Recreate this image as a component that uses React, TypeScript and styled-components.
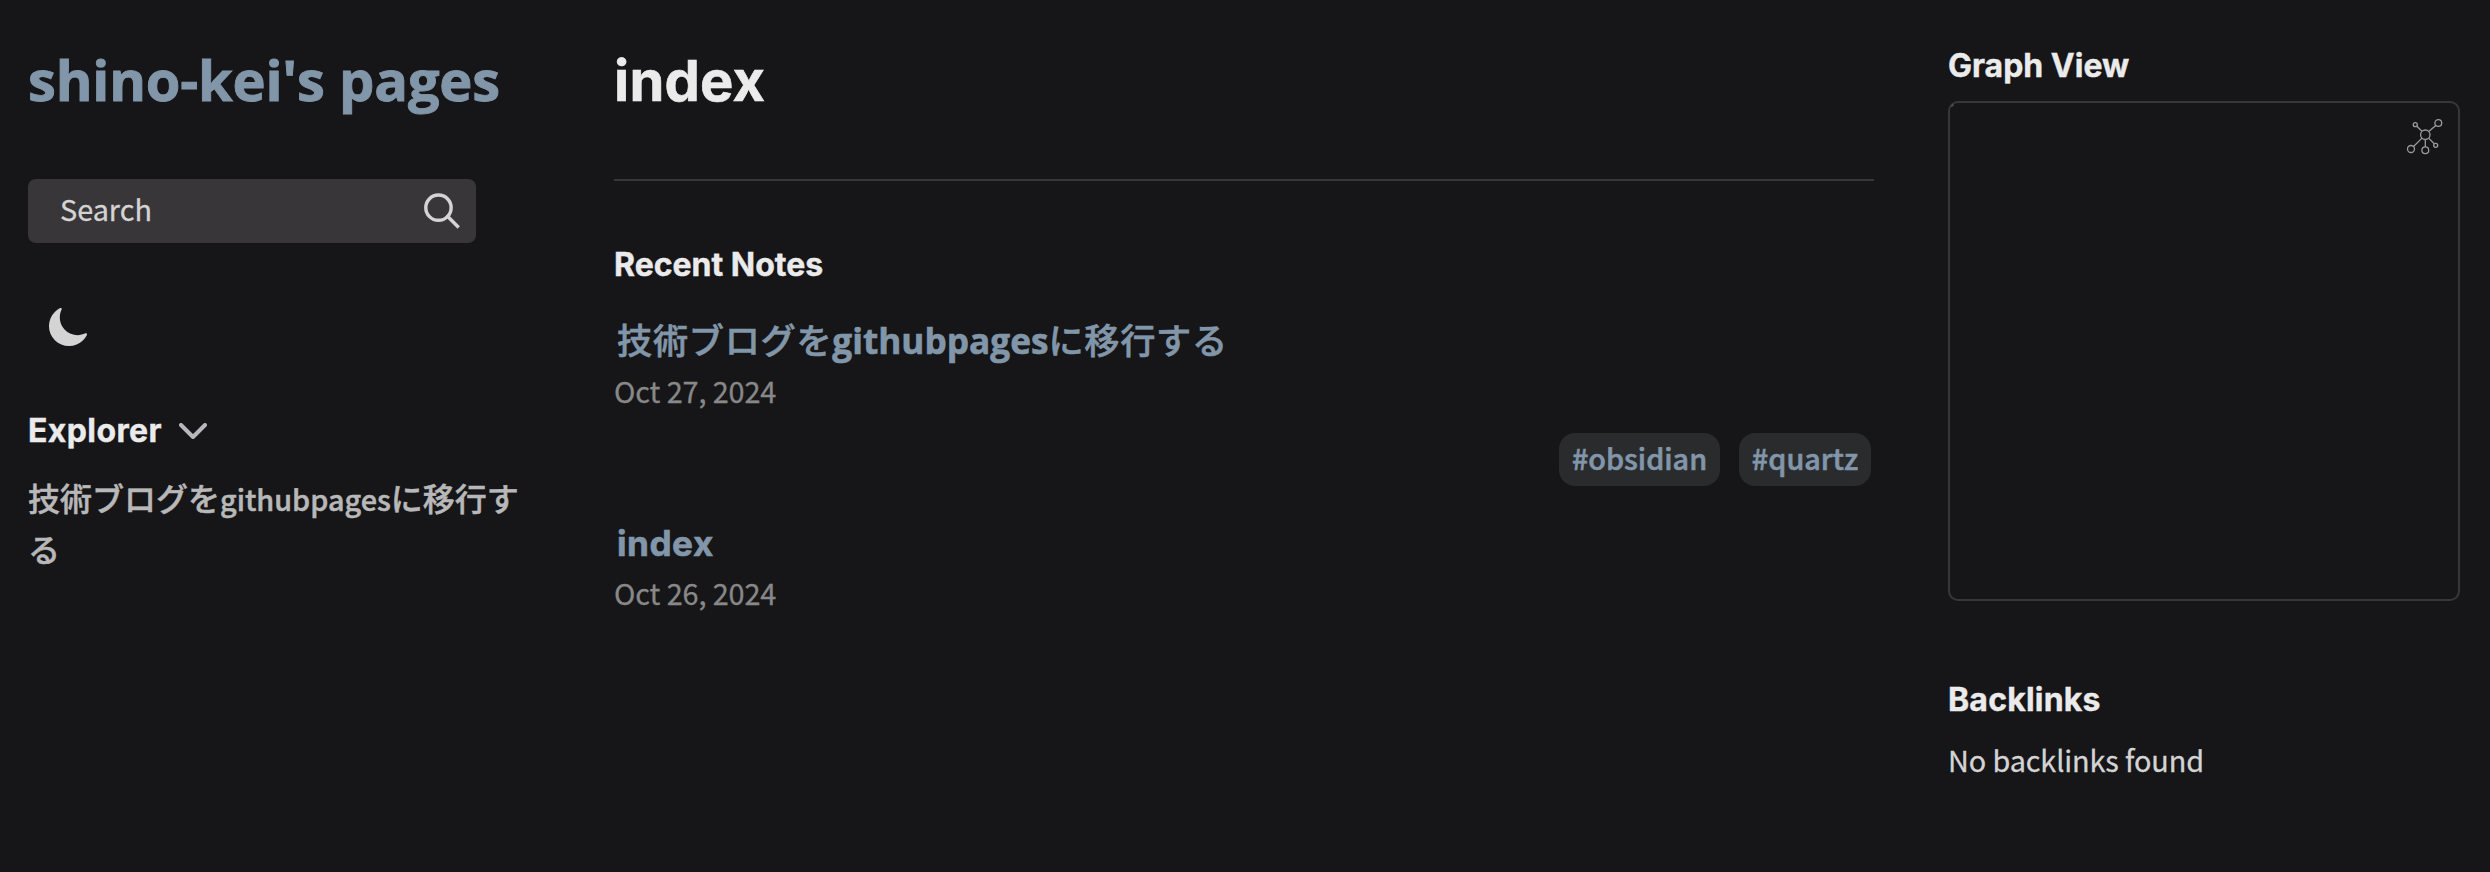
import React from "react";
import styled, { createGlobalStyle } from "styled-components";

const color = {
  light: "#161618",
  lightgray: "#393639",
  gray: "#888888",
  darkgray: "#d4d4d4",
  dark: "#ebebec",
  secondary: "#8296aa",
  highlight: "#2a2b2d",
};

const bodyFont = `"Noto Sans CJK JP", sans-serif`;
const headerFont = `"Inter", "Noto Sans CJK JP", sans-serif`;
const displayFont = `"Open Sans", "Noto Sans CJK JP", sans-serif`;

const GlobalStyle = createGlobalStyle`
  * { box-sizing: border-box; }
  body {
    margin: 0;
    background: ${color.light};
    color: ${color.darkgray};
    font-family: ${bodyFont};
    font-size: 28.8px;
  }
  h1, h2, h3, p, ul { margin: 0; padding: 0; font-size: inherit; }
`;

const Page = styled.div`
  display: grid;
  grid-template-columns: 512px 1260px 512px;
  column-gap: 74px;
  min-height: 872px;
  padding: 44px 30px 0 28px;
`;

const Column = styled.div<{ $offset?: number }>`
  display: flex;
  flex-direction: column;
  min-width: 0;
  padding-top: ${(p) => p.$offset ?? 0}px;
`;

const SiteTitle = styled.h1`
  height: 70px;
  margin: 0 0 65px;
  font: 700 56px/70px ${displayFont};
  letter-spacing: -0.2px;
  -webkit-text-stroke: 0.9px currentColor;
  color: ${color.secondary};
  white-space: nowrap;
`;

const PageTitle = styled.h1`
  height: 70px;
  font: 700 56px/70px ${headerFont};
  letter-spacing: 0.2px;
  -webkit-text-stroke: 0.6px currentColor;
  color: ${color.dark};
`;

const Rule = styled.hr`
  width: 100%;
  height: 2px;
  margin: 63px 0 64px;
  border: 0;
  background: ${color.lightgray};
`;

const SectionTitle = styled.h3<{ $spacing?: number }>`
  height: 40px;
  font: 700 32px/40px ${headerFont};
  letter-spacing: ${(p) => p.$spacing ?? 0}px;
  -webkit-text-stroke: 0.4px currentColor;
  color: ${color.dark};
  white-space: nowrap;
`;

const SearchButton = styled.button`
  display: flex;
  align-items: center;
  justify-content: space-between;
  width: 448px;
  height: 64px;
  padding: 0 16px 0 32px;
  border: 0;
  border-radius: 8px;
  background: ${color.lightgray};
  color: ${color.darkgray};
`;

const SearchLabel = styled.span`
  padding-bottom: 5px;
  font: 400 28.8px/40px ${bodyFont};
  -webkit-text-stroke: 0.3px currentColor;
`;

const ThemeToggle = styled.div`
  height: 40px;
  margin: 64px 0 64px 20px;
  color: ${color.darkgray};

  svg { display: block; }
`;

const ExplorerHeader = styled.div`
  display: flex;
  align-items: center;
  gap: 17px;
  height: 40px;
  margin-bottom: 21px;
`;

const ExplorerItem = styled.p`
  width: 492px;
  font: 500 32px/51px ${bodyFont};
  -webkit-text-stroke: 0.5px currentColor;
  color: #b8b8b9;
  word-break: break-all;
`;

const Latin = styled.span`
  font-size: 28.8px;
  line-height: 1;
`;

const NoteList = styled.ul`
  display: flex;
  flex-direction: column;
  gap: 33px;
  margin-top: 32px;
  list-style: none;
`;

const Note = styled.li`
  display: flex;
  flex-direction: column;
`;

const NoteLink = styled.a`
  height: 44px;
  margin: 0 0 10px 3px;
  font: 500 35.2px/44px ${bodyFont};
  letter-spacing: 0.7px;
  -webkit-text-stroke: 0.6px currentColor;
  color: ${color.secondary};
  white-space: nowrap;
`;

const NoteLatin = styled.span<{ $display?: boolean }>`
  font-family: ${(p) => (p.$display ? displayFont : headerFont)};
  font-weight: 700;
  line-height: 1;
  letter-spacing: ${(p) => (p.$display ? 0 : 0.5)}px;
`;

const NoteDate = styled.p`
  height: 40px;
  font: 400 28.8px/40px ${bodyFont};
  letter-spacing: -0.1px;
  -webkit-text-stroke: 0.3px currentColor;
  color: ${color.gray};
`;

const Tags = styled.div`
  display: flex;
  justify-content: flex-end;
  gap: 19px;
  margin: 22px 3px 0 0;
`;

const Tag = styled.a<{ $width: number }>`
  width: ${(p) => p.$width}px;
  height: 53px;
  border-radius: 16px;
  background: ${color.highlight};
  font: 500 28.8px/49px ${bodyFont};
  -webkit-text-stroke: 0.6px currentColor;
  color: ${color.secondary};
  text-align: center;
`;

const GraphBox = styled.div`
  position: relative;
  display: flex;
  justify-content: flex-end;
  height: 500px;
  margin: 15px 0 79px;
  padding: 14px;
  border: 2px solid ${color.lightgray};
  border-radius: 10px;
`;

const CornerNode = styled.span`
  position: absolute;
  top: 2px;
  left: 1px;
  width: 3px;
  height: 1px;
  background: #5a6570;
  transform: rotate(-45deg);
`;

const Paragraph = styled.p`
  margin-top: 20px;
  font: 400 28.8px/40px ${bodyFont};
  letter-spacing: -0.1px;
  -webkit-text-stroke: 0.3px currentColor;
  color: ${color.darkgray};
`;

const SearchIcon = () => (
  <svg width="36" height="36" viewBox="0 0 19.9 19.7" fill="none" stroke="currentColor" strokeWidth="1.9">
    <path d="M18.5 18.3l-5.4-5.4" strokeLinecap="square" />
    <circle cx="8" cy="8" r="7" />
  </svg>
);

const MoonIcon = () => (
  <svg width="40" height="40" viewBox="0 0 100 100" fill="currentColor">
    <path d="M96.76,66.458c-0.853-0.852-2.15-1.064-3.23-0.534c-6.063,2.991-12.858,4.571-19.655,4.571C62.022,70.495,50.88,65.88,42.5,57.5C29.043,44.043,25.658,23.536,34.076,6.47c0.532-1.08,0.318-2.379-0.534-3.23c-0.851-0.852-2.15-1.064-3.23-0.534c-4.918,2.427-9.375,5.619-13.246,9.491c-9.447,9.447-14.65,22.008-14.65,35.369c0,13.36,5.203,25.921,14.65,35.368s22.008,14.65,35.368,14.65c13.361,0,25.921-5.203,35.369-14.65c3.872-3.871,7.064-8.328,9.491-13.246C97.826,68.608,97.611,67.309,96.76,66.458z" />
  </svg>
);

const FoldIcon = () => (
  <svg width="28" height="16" viewBox="5 8 14 8" fill="none" stroke="#b8b8bc" strokeWidth="2" strokeLinecap="round" strokeLinejoin="round">
    <polyline points="6 9 12 15 18 9" />
  </svg>
);

const GraphIcon = () => (
  <svg width="40" height="40" viewBox="0 0 40 40" fill="none" stroke="#9b9b9c" strokeWidth="1.3">
    <circle cx="21.3" cy="17.7" r="4.7" />
    <circle cx="34.3" cy="6" r="3.4" />
    <circle cx="11.3" cy="7.7" r="2" />
    <circle cx="7" cy="32" r="3.5" />
    <circle cx="21.3" cy="33.3" r="3.4" />
    <circle cx="31.7" cy="28.3" r="2" />
    <path d="M24.7 14.4 31.8 8.4M18 14.3 12.8 9.2M18 21.1 9.5 29.5M21.3 22.4V29.9M24.6 21.1 30.3 26.8" />
  </svg>
);

export default function App() {
  return (
    <>
      <GlobalStyle />
      <Page>
        <Column>
          <SiteTitle>shino-kei's pages</SiteTitle>
          <SearchButton>
            <SearchLabel>Search</SearchLabel>
            <SearchIcon />
          </SearchButton>
          <ThemeToggle>
            <MoonIcon />
          </ThemeToggle>
          <ExplorerHeader>
            <SectionTitle $spacing={0.4}>Explorer</SectionTitle>
            <FoldIcon />
          </ExplorerHeader>
          <ExplorerItem>
            技術ブログを<Latin>githubpages</Latin>に移行する
          </ExplorerItem>
        </Column>

        <Column $offset={2}>
          <PageTitle>index</PageTitle>
          <Rule />
          <SectionTitle>Recent Notes</SectionTitle>
          <NoteList>
            <Note>
              <NoteLink>
                技術ブログを<NoteLatin $display>githubpages</NoteLatin>に移行する
              </NoteLink>
              <NoteDate>Oct 27, 2024</NoteDate>
              <Tags>
                <Tag $width={161}>#obsidian</Tag>
                <Tag $width={132}>#quartz</Tag>
              </Tags>
            </Note>
            <Note>
              <NoteLink>
                <NoteLatin>index</NoteLatin>
              </NoteLink>
              <NoteDate>Oct 26, 2024</NoteDate>
            </Note>
          </NoteList>
        </Column>

        <Column $offset={2}>
          <SectionTitle>Graph View</SectionTitle>
          <GraphBox>
            <CornerNode />
            <GraphIcon />
          </GraphBox>
          <SectionTitle $spacing={0.2}>Backlinks</SectionTitle>
          <Paragraph>No backlinks found</Paragraph>
        </Column>
      </Page>
    </>
  );
}
